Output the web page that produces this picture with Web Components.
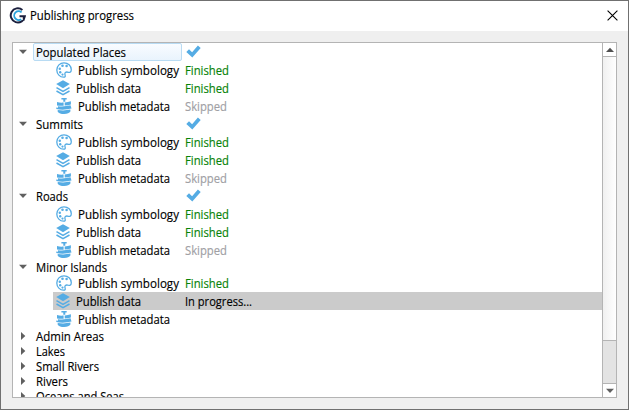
<!DOCTYPE html>
<html lang="en"><head><meta charset="utf-8"><title>Publishing progress</title>
<style>html,body{margin:0;height:100%;overflow:hidden}body{font:12px "Open Sans","Noto Sans",sans-serif;color:#000}</style></head>
<body><publish-dialog></publish-dialog>
<script>
const define=(n,c)=>customElements.define(n,c);

// A single line of text fitted to a given width.
define('fit-text',class extends HTMLElement{
  connectedCallback(){
    const r=this.attachShadow({mode:'open'});
    r.innerHTML='<style>:host{display:block;white-space:pre;flex:none;line-height:15px;height:15px;-webkit-text-stroke:.15px currentColor}span{display:block;width:max-content;transform-origin:0 50%}</style><span></span>';
    const s=r.querySelector('span');s.textContent=this.getAttribute('text');
    const w=+this.getAttribute('w');this.style.width=w+'px';
    s.style.transform=`scaleX(${w/s.getBoundingClientRect().width})`;
  }
});

const ICONS={
  palette:[16,16,'<path d="M8 .8C4 .8.8 4 .8 8s3.200 7.200 6.700 7.200c1.800 0 2-1 1.600-2.100-.6-1.500-.2-3 1.600-3.100 1.300-.1 2.200.7 3.200.4 1-.3 1.400-1.300 1.400-2.600C15.300 3.800 12 .8 8 .8z" fill="#fff" stroke="#55ace4" stroke-width="1.300"/><g fill="#55ace4"><circle cx="6.500" cy="3.800" r="1.300"/><circle cx="10.600" cy="4" r="1.300"/><circle cx="3.800" cy="6.700" r="1.200"/><circle cx="4.200" cy="10.200" r="1.200"/><circle cx="6.500" cy="12.600" r="1.100"/></g>'],
  layers:[14,16,'<path d="M7 .2 13.800 4.100 7 8.200.2 4.100z" fill="#55ace4"/><path d="M.5 7.600 7 11.300l6.500-3.700M.5 11 7 14.700l6.500-3.700" fill="none" stroke="#55ace4" stroke-width="1.500"/>'],
  meta:[16,16,'<g fill="#55ace4"><path d="M5.400 0h5.300v1.500H9.300v2.300H7.300V1.500H5.400z"/><path d="M1 4c2 .7 4.200.8 6.600.6v3.100C5.200 8 3 7.800 1 7.400zM8.700 4.500c2.200-.2 4.200-.6 6.200-1.200v3.200c-2 .6-4 1-6.200 1.100z"/><path d="M2 8.200c4.500.5 8.500.1 12.500-.9l1 3.200c-5 1.300-10 1.500-15.200.6V9.500l1.700.2z"/><path d="M1.700 12c4.500.7 8.700.5 12.700-.4v1.900c-1 1.600-3 2.500-6.200 2.500-3.300 0-5.300-.8-6.500-2.300z"/></g>'],
  check:[15,13,'<path d="M.3 7 3 4.300l3.100 3L11.900.5l2.800 2.600L6.300 12.500z" fill="#55ace4"/>'],
  down:[8,6,'<path d="M0 .8h8L4 5z" fill="#606060"/>'],
  right:[5,8,'<path d="M0 0v8l4.300-4z" fill="#606060"/>'],
  up:[8,6,'<path d="M0 5h8L4 .8z" fill="#505050"/>'],
  close:[11,11,'<path d="M.6.600l9.800 9.800M10.400.600.600 10.400" stroke="#000" stroke-width="1.100"/>'],
  logo:[18,18,'<path d="M13.400 2.900A7.100 7.100 0 1 0 15.900 9.200H10.500M14.800 9v4.500" fill="none" stroke="#1b1f3d" stroke-width="2"/><path d="M12.600 5.400A4.400 4.400 0 1 0 12.200 12.200" fill="none" stroke="#2ba3dc" stroke-width="1.800"/>']
};
define('ui-icon',class extends HTMLElement{
  connectedCallback(){
    const [w,h,p]=ICONS[this.getAttribute('name')];
    this.attachShadow({mode:'open'}).innerHTML=`<style>:host{display:block;flex:none}svg{display:block}</style><svg width="${w}" height="${h}" viewBox="0 0 ${w} ${h}">${p}</svg>`;
  }
});

// Top-level node: arrow, label, optional check mark; its steps are slotted.
define('tree-group',class extends HTMLElement{
  connectedCallback(){
    const a=n=>this.getAttribute(n),open=this.hasAttribute('open'),done=this.hasAttribute('done');
    this.attachShadow({mode:'open'}).innerHTML=`<style>
      :host{display:block}
      .row{display:grid;grid-template-columns:20px 149px 1fr;height:${done?18:15}px;align-items:center}
      .arrow{padding-left:${open?6:8}px}
      .label{box-sizing:border-box;height:${done?18:15}px;padding:${done?2:1}px 0 0 3px}
      .current{border:1px solid #b8dbf3;border-radius:2px;padding:1px 0 0 2px;background:linear-gradient(#f9fcff,#e9f4fd)}
      .check{padding:0 0 1px 4px}
    </style><div class="row"><div class="arrow"><ui-icon name="${open?'down':'right'}"></ui-icon></div>
    <div class="label ${this.hasAttribute('current')?'current':''}"><fit-text text="${a('label')}" w="${a('w')}"></fit-text></div>
    <div class="check">${done?'<ui-icon name="check"></ui-icon>':''}</div></div><slot></slot>`;
  }
});

const STEPS={palette:['Publish symbology',101],layers:['Publish data',65],meta:['Publish metadata',92]};
const STATES={finished:['Finished',44,'#078307'],skipped:['Skipped',42,'#a0a0a4'],progress:['In progress...',67,'#000']};
define('publish-step',class extends HTMLElement{
  connectedCallback(){
    const k=this.getAttribute('kind'),[t,w]=STEPS[k],s=STATES[this.getAttribute('state')];
    this.attachShadow({mode:'open'}).innerHTML=`<style>
      :host{display:grid;grid-template-columns:129px 1fr;height:18px;align-items:start;margin-left:40px}
      :host([state=progress]){background:#cbcbcb}
      .name{display:flex;gap:6px;padding-left:3px}
      ui-icon{padding-top:1px}
      fit-text{padding-top:2px}
      .state{padding-left:3px;color:${s?s[2]:'#000'}}
    </style><div class="name"><ui-icon name="${k}"></ui-icon><fit-text text="${t}" w="${w}"></fit-text></div>
    <div class="state">${s?`<fit-text text="${s[0]}" w="${s[1]}"></fit-text>`:''}</div>`;
  }
});

define('scroll-bar',class extends HTMLElement{
  connectedCallback(){
    this.attachShadow({mode:'open'}).innerHTML=`<style>
      :host{display:flex;flex-direction:column;width:13px;border-left:1px solid #b4b4b4;background:#e3e3e3}
      .b{height:13px;background:#fff;display:grid;place-items:center}
      .up{border-bottom:1px solid #b4b4b4}.dn{border-top:1px solid #b4b4b4;margin-top:auto}
      .thumb{height:283px;border-bottom:1px solid #b4b4b4;background:linear-gradient(90deg,#f0f0f0,#fff)}
    </style><div class="b up"><ui-icon name="up"></ui-icon></div><div class="thumb"></div><div class="b dn"><ui-icon name="down"></ui-icon></div>`;
  }
});

define('publish-dialog',class extends HTMLElement{
  connectedCallback(){
    const steps=(a,b,c)=>`<publish-step kind="palette" state="${a}"></publish-step><publish-step kind="layers" state="${b}"></publish-step><publish-step kind="meta" state="${c}"></publish-step>`;
    const done=steps('finished','finished','skipped');
    this.attachShadow({mode:'open'}).innerHTML=`<style>
      :host{display:flex;flex-direction:column;box-sizing:border-box;width:629px;height:410px;border:1px solid #707070;background:#efefef}
      header{height:30px;background:#fff;display:flex;align-items:center;padding:0 10px 1px 8px;box-sizing:border-box}
      header fit-text{margin-left:3px;margin-right:auto}
      main{flex:1;margin:11px 11px 11px;border:1px solid #b4b4b4;background:#fff;display:flex;min-height:0}
      .tree{flex:1;overflow:hidden}
    </style>
    <header><ui-icon name="logo"></ui-icon><fit-text text="Publishing progress" w="104"></fit-text><ui-icon name="close"></ui-icon></header>
    <main><div class="tree">
      <tree-group open done current label="Populated Places" w="90">${done}</tree-group>
      <tree-group open done label="Summits" w="47">${done}</tree-group>
      <tree-group open done label="Roads" w="32">${done}</tree-group>
      <tree-group open label="Minor Islands" w="71">${steps('finished','progress','')}</tree-group>
      <tree-group label="Admin Areas" w="68"></tree-group>
      <tree-group label="Lakes" w="29"></tree-group>
      <tree-group label="Small Rivers" w="63"></tree-group>
      <tree-group label="Rivers" w="32"></tree-group>
      <tree-group label="Oceans and Seas" w="88"></tree-group>
    </div><scroll-bar></scroll-bar></main>`;
  }
});
</script></body></html>
